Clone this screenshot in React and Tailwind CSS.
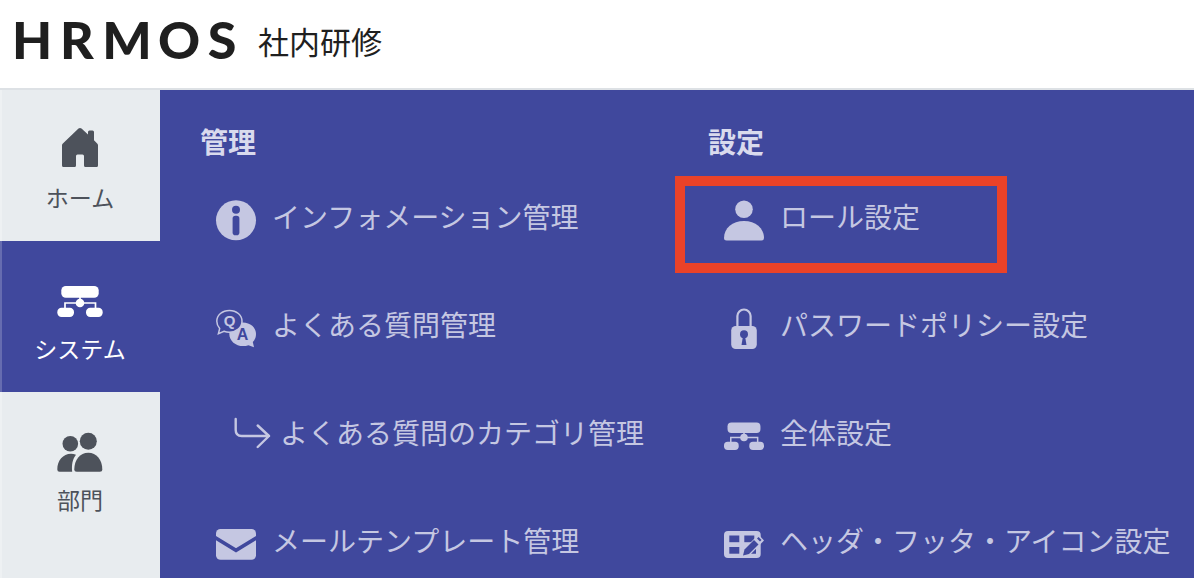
const iconCls = 'w-10 h-10 shrink-0'

function Logo() {
  return (
    <svg
      viewBox="0 -14 226 72"
      className="w-[226px] h-18 shrink-0 font-[Lato] text-[52px] font-black"
      fill="currentColor"
      textAnchor="middle"
      role="img"
      aria-label="HRMOS"
    >
      <text x="20" y="41">H</text>
      <text x="65" y="41">R</text>
      <text x="115" y="41">M</text>
      <text x="167" y="41">O</text>
      <text x="210" y="41">S</text>
    </svg>
  )
}

function HomeIcon() {
  return (
    <svg viewBox="0 0 48 48" className="w-12 h-12" fill="currentColor" aria-hidden="true">
      <path d="M22.5 2.6Q24 1.4 25.5 2.6L32 8.5V6q0-1.5 1.5-1.5h3q1.5 0 1.5 1.5v8.3l3.4 3.4q.6.7.6 1.6v20.2q0 1.5-1.5 1.5H29.5q-1.5 0-1.5-1.5V30q0-1.5-1.5-1.5h-5Q20 28.5 20 30v9.5q0 1.5-1.5 1.5h-11Q6 41 6 39.5V19.3q0-.9.6-1.6Z" />
    </svg>
  )
}

function SystemIcon({ className = 'w-12 h-12', viewBox = '0 0 48 48' }) {
  return (
    <svg viewBox={viewBox} className={className} fill="currentColor" aria-hidden="true">
      <rect x="5.3" y="9" width="37.4" height="11.7" rx="4.5" />
      <rect x="1.3" y="30.7" width="16.7" height="9.3" rx="4.2" />
      <rect x="30" y="30.7" width="16.7" height="9.3" rx="4.2" />
      <circle cx="24" cy="26" r="4.3" />
      <path d="M9 32V26H39.5V32M24 20v6" fill="none" stroke="currentColor" strokeWidth="1.7" />
    </svg>
  )
}

function GroupIcon() {
  return (
    <svg viewBox="0 0 48 48" className="w-12 h-12" fill="currentColor" aria-hidden="true">
      <circle cx="14.3" cy="15.7" r="7.8" />
      <circle cx="32.3" cy="13.3" r="8.5" />
      <path d="M20 26.8Q17.5 25.7 15 25.7C7 25.7 1.3 32.5 1.3 41.5Q1.3 43.7 3.5 43.7H16.2C15.5 37 16.5 31 20 26.8Z" />
      <path d="M32.3 24.7C24 24.7 18.3 32 18.3 41.2Q18.3 43.7 20.8 43.7H43.8Q46.3 43.7 46.3 41.2C46.3 32 40.5 24.7 32.3 24.7Z" />
    </svg>
  )
}

function InfoIcon() {
  return (
    <svg viewBox="0 0 40 40" className={iconCls} fill="currentColor" overflow="visible" aria-hidden="true">
      <circle cx="20" cy="20.3" r="20" />
      <circle cx="20" cy="9.8" r="4" fill="#40489d" />
      <rect x="16.6" y="15.7" width="6.8" height="19.5" rx="2.8" fill="#40489d" />
    </svg>
  )
}

function FaqIcon() {
  return (
    <svg viewBox="0 0 40 40" className={iconCls} aria-hidden="true">
      <path d="M26.7 14.5C34.5 14.5 40 19.5 40 26C40 29.5 38.7 32 36.8 34L38 39.2L32.5 37.2C23 40.5 13.3 34.5 13.3 26C13.3 19.5 19 14.5 26.7 14.5Z" fill="currentColor" />
      <path d="M13.4 2.4C20.5 2.4 26 7.2 26 13.2C26 19.5 20.3 24.2 13.4 24.2Q10.5 24.2 8 23.3L2.4 25.8L3.7 20.5Q.8 17.3 .8 13.2C.8 7.2 6.3 2.4 13.4 2.4Z" fill="#40489d" stroke="currentColor" strokeWidth="1.5" />
      <text x="13.5" y="18" textAnchor="middle" className="font-['Liberation_Sans'] text-[15px] font-bold" fill="currentColor">Q</text>
      <text x="26.5" y="32" textAnchor="middle" className="font-['Liberation_Sans'] text-[16px] font-bold" fill="#40489d">A</text>
    </svg>
  )
}

function SubArrowIcon() {
  return (
    <svg viewBox="0 0 40 40" className={iconCls} fill="none" stroke="currentColor" strokeWidth="2.4" strokeLinecap="round" strokeLinejoin="round" aria-hidden="true">
      <path d="M3.7 3V14Q3.7 20 9.7 20H37M25.7 9.5L37 20L25.7 31" />
    </svg>
  )
}

function MailIcon() {
  return (
    <svg viewBox="0 0 40 40" className={iconCls} aria-hidden="true">
      <rect y="5" width="40" height="30.7" rx="4.5" fill="currentColor" />
      <path d="M-1 13.5L20 26.3L41 13.5" fill="none" stroke="#40489d" strokeWidth="3.6" />
    </svg>
  )
}

function UserIcon() {
  return (
    <svg viewBox="0 0 40 40" className={iconCls} fill="currentColor" overflow="visible" aria-hidden="true">
      <circle cx="20" cy="9.3" r="8.8" />
      <path d="M20 21C8.5 21 0 28 0 38Q0 40.5 2.5 40.5H37.5Q40 40.5 40 38C40 28 31.5 21 20 21Z" />
    </svg>
  )
}

function LockIcon() {
  return (
    <svg viewBox="0 0 40 40" className={iconCls} overflow="visible" aria-hidden="true">
      <path d="M13.4 19V8.1a6.6 6.6 0 0 1 13.2 0V19" fill="none" stroke="currentColor" strokeWidth="2.2" />
      <rect x="7.2" y="18" width="25.6" height="23" rx="4.5" fill="currentColor" />
      <circle cx="20" cy="26.2" r="4" fill="#40489d" />
      <path d="M19 28h2l1.5 9h-5Z" fill="#40489d" />
    </svg>
  )
}

function LayoutIcon() {
  return (
    <svg viewBox="0 0 40 40" className={iconCls} aria-hidden="true">
      <rect y="7" width="36.7" height="27" rx="4" fill="currentColor" />
      <g fill="#40489d">
        <rect x="5.3" y="11.5" width="10" height="6.7" />
        <rect x="5.3" y="23" width="10" height="6.7" />
        <rect x="20.3" y="11.5" width="10" height="6.7" />
        <path d="M32 22.5V29.7H25.5Z" />
      </g>
      <path d="M17.5 33L19.5 25.5L34.5 10.5L40 16.5L26 31Z" fill="currentColor" />
      <path d="M19 31.5L20.5 25.5L30 16L34.5 20.5L25 30Z" fill="#40489d" />
      <path d="M33 14.5L34.6 13L37.5 16L36 17.5Z" fill="#40489d" />
    </svg>
  )
}

const NAV_ITEMS = [
  { label: 'ホーム', icon: <HomeIcon /> },
  { label: 'システム', icon: <SystemIcon />, active: true },
  { label: '部門', icon: <GroupIcon /> },
]

const MENU_GROUPS = [
  {
    title: '管理',
    items: [
      { label: 'インフォメーション管理', icon: <InfoIcon /> },
      { label: 'よくある質問管理', icon: <FaqIcon /> },
      { label: 'よくある質問のカテゴリ管理', icon: <SubArrowIcon />, sub: true },
      { label: 'メールテンプレート管理', icon: <MailIcon /> },
    ],
  },
  {
    title: '設定',
    items: [
      { label: 'ロール設定', icon: <UserIcon />, highlight: true },
      { label: 'パスワードポリシー設定', icon: <LockIcon /> },
      { label: '全体設定', icon: <SystemIcon className={iconCls} viewBox="1.3 1.5 45.4 45.4" /> },
      { label: 'ヘッダ・フッタ・アイコン設定', icon: <LayoutIcon /> },
    ],
  },
]

function NavItem({ item }) {
  return (
    <a
      href="#"
      aria-current={item.active ? 'page' : undefined}
      className={`flex flex-col items-center pt-9 pb-[26px] gap-[5px] ${
        item.active
          ? 'bg-[#40489d] text-white shadow-[inset_2px_0_#666cb0]'
          : 'text-[#4d525b] shadow-[inset_2px_0_#eef1f3]'
      }`}
    >
      {item.icon}
      <span className="text-[23px] leading-9">{item.label}</span>
    </a>
  )
}

function MenuItem({ item }) {
  return (
    <li className="relative">
      <a
        href="#"
        className={`flex items-center h-27 whitespace-nowrap text-[28px] leading-10 text-[#c5c7e2] ${
          item.sub ? 'pl-8 gap-2' : 'pl-4 gap-4'
        }`}
      >
        {item.icon}
        <span className="pb-2">{item.label}</span>
      </a>
      {item.highlight && (
        <div className="absolute -left-[33px] top-[10px] w-[332px] h-[97px] border-10 border-[#ea4228] pointer-events-none" />
      )}
    </li>
  )
}

export default function App() {
  return (
    <div className="flex flex-col h-screen overflow-hidden bg-white font-['Noto_Sans_CJK_JP',sans-serif]">
      {/* Header */}
      <header className="flex items-center gap-5 h-[90px] shrink-0 pl-3 pb-2 border-b-2 border-[#dde1e5] text-[#1f1f1f]">
        <Logo />
        <span className="text-[31px] leading-none">社内研修</span>
      </header>

      <div className="flex flex-1 min-h-0">
        {/* Sidebar */}
        <nav className="w-40 shrink-0 bg-[#e8ecef] shadow-[inset_2px_0_#eef1f3]">
          {NAV_ITEMS.map(item => (
            <NavItem key={item.label} item={item} />
          ))}
        </nav>

        {/* Menu panel */}
        <main className="flex-1 grid grid-cols-2 gap-[22px] pl-10 pt-[31px] bg-[#40489d]">
          {MENU_GROUPS.map(group => (
            <section key={group.title}>
              <h2 className="mb-[5px] text-[28px] leading-10 font-bold text-[#d9daed]">{group.title}</h2>
              <ul>
                {group.items.map(item => (
                  <MenuItem key={item.label} item={item} />
                ))}
              </ul>
            </section>
          ))}
        </main>
      </div>
    </div>
  )
}
